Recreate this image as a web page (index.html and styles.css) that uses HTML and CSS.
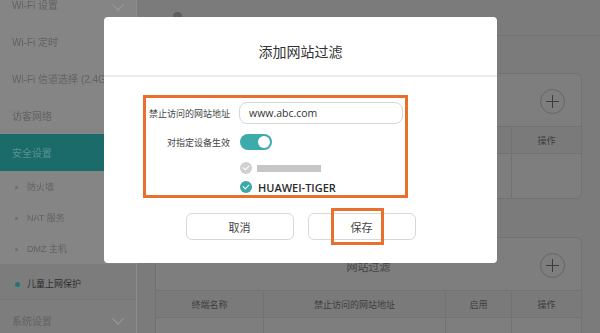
FILE: index.html
```html
<!DOCTYPE html>
<html lang="zh-CN">
<head>
    <meta charset="UTF-8">
    <title>添加网站过滤</title>
    <link rel="stylesheet" href="styles.css">
</head>
<body>
    <div class="page">
        <div class="sidebar">
            <div class="nav-group">Wi-Fi 设置 <span class="chev"></span></div>
            <div class="nav-item">Wi-Fi 定时</div>
            <div class="nav-item">Wi-Fi 信道选择 (2.4G)</div>
            <div class="nav-item">访客网络</div>
            <div class="nav-group active">安全设置</div>
            <div class="nav-sub">防火墙</div>
            <div class="nav-sub">NAT 服务</div>
            <div class="nav-sub">DMZ 主机</div>
            <div class="nav-sub current">儿童上网保护</div>
            <div class="nav-group last">系统设置 <span class="chev"></span></div>
        </div>

        <div class="main">
            <div class="topbar"><span class="top-dot"></span></div>

            <!-- 第一张表被弹窗遮住, 只露出右侧 -->
            <div class="card first">
                <div class="card-title">
                    <span class="add-btn"></span>
                </div>
                <div class="row head">
                    <div class="c1"></div>
                    <div class="c2"></div>
                    <div class="c3"></div>
                    <div class="c4">操作</div>
                </div>
                <div class="row body">
                    <div class="c1"></div>
                    <div class="c2"></div>
                    <div class="c3"></div>
                    <div class="c4"></div>
                </div>
            </div>

            <div class="card">
                <div class="card-title">
                    <span>网站过滤</span>
                    <span class="add-btn"></span>
                </div>
                <div class="row head">
                    <div class="c1">终端名称</div>
                    <div class="c2">禁止访问的网站地址</div>
                    <div class="c3">启用</div>
                    <div class="c4">操作</div>
                </div>
                <div class="row body">
                    <div class="c1"></div>
                    <div class="c2"></div>
                    <div class="c3"></div>
                    <div class="c4"></div>
                </div>
            </div>
        </div>
    </div>

    <div class="modal">
        <div class="modal-head">添加网站过滤</div>
        <div class="modal-body">
            <div class="mark-box">
                <div class="form-row r1">
                    <label>禁止访问的网站地址</label>
                    <div class="input">www.abc.com</div>
                </div>
                <div class="form-row r2">
                    <label>对指定设备生效</label>
                    <div class="switch"><span class="knob"></span></div>
                </div>
                <div class="form-row r3">
                    <label></label>
                    <span class="check off"></span>
                    <span class="hidden-name"></span>
                </div>
                <div class="form-row r4">
                    <label></label>
                    <span class="check on"></span>
                    <span class="dev-name">HUAWEI-TIGER</span>
                </div>
            </div>
            <div class="actions">
                <button class="btn">取消</button>
                <button class="btn save">保存<span class="mark-save"></span></button>
            </div>
        </div>
    </div>
</body>
</html>
```

FILE: styles.css
```css
body {
    margin: 0;
    font-family: "Liberation Sans", "Noto Sans CJK SC", sans-serif;
    background: #7b7b7b;
    overflow: hidden;
}
.page {
    display: flex;
    height: 333px;
    overflow: hidden;
}

/* 左侧菜单 (已被遮罩变暗) */
.sidebar {
    width: 136px;
    flex-shrink: 0;
    background: #858585;
    border-right: 1px solid #8e8e8e;
    margin-top: -14px;
    color: #626262;
    font-size: 10px;
}
.nav-group,
.nav-item {
    height: 37px;
    display: flex;
    align-items: center;
    padding-left: 12px;
    position: relative;
    filter: blur(0.5px);
}
.nav-group.active {
    background: #1a6b69;
    color: #5a9391;
}
.nav-sub {
    height: 31px;
    display: flex;
    align-items: center;
    padding-left: 27px;
    position: relative;
    font-size: 9px;
    filter: blur(0.5px);
}
.nav-sub:first-of-type {
    height: 33px;
}
.nav-sub::before {
    content: "";
    position: absolute;
    left: 15px;
    top: 50%;
    width: 3px;
    height: 3px;
    margin-top: -1px;
    border-radius: 50%;
    background: #6e6e6e;
}
.nav-sub.current {
    background: #7c7c7c;
    color: #2e2e2e;
    padding-top: 4px;
    border-bottom: 1px solid #777;
    filter: none;
}
.nav-sub.current::before {
    width: 5px;
    height: 5px;
    left: 15px;
    margin-top: 0;
    background: #1e7775;
}
.nav-group.last {
    height: 40px;
    background: #7d7d7d;
}
.chev {
    position: absolute;
    right: 14px;
    top: 15px;
    width: 7px;
    height: 7px;
    border-right: 1px solid #9a9a9a;
    border-bottom: 1px solid #9a9a9a;
    transform: rotate(45deg);
}

/* 右侧内容 */
.main {
    flex: 1;
    padding: 0 18px;
}
.topbar {
    height: 35px;
    margin: 0 -18px;
    border-bottom: 1px solid #737373;
    position: relative;
}
.top-dot {
    position: absolute;
    left: 36px;
    top: 12px;
    width: 9px;
    height: 9px;
    border-radius: 50%;
    background: #5e5e5e;
}
.card {
    border: 1px solid #727272;
    border-radius: 6px;
    background: #7e7e7e;
    margin-top: 38px;
    overflow: hidden;
    font-size: 9px;
    color: #3e3e3e;
}
.card.first {
    margin-top: 37px;
}
.card-title {
    height: 53px;
    display: flex;
    align-items: center;
    justify-content: center;
    position: relative;
    font-size: 11px;
    color: #444;
    border-bottom: 1px solid #727272;
    padding-top: 3px;
    box-sizing: border-box;
}
.add-btn {
    position: absolute;
    right: 16px;
    top: 15px;
    width: 23px;
    height: 23px;
    border: 1px solid #666;
    border-radius: 50%;
}
.add-btn::before,
.add-btn::after {
    content: "";
    position: absolute;
    background: #3c3c3c;
    left: 5px;
    top: 11px;
    width: 13px;
    height: 1px;
}
.add-btn::after {
    left: 11px;
    top: 5px;
    width: 1px;
    height: 13px;
}
.row {
    display: flex;
}
.row.head {
    height: 26px;
    border-bottom: 1px solid #727272;
    background: #7a7a7a;
}
.row.body {
    height: 44px;
}
.row > div {
    display: flex;
    align-items: center;
    justify-content: center;
    border-right: 1px solid #727272;
}
.row > div:last-child {
    border-right: none;
}
.c1 { width: 107px; }
.c2 { width: 181px; }
.c3 { width: 65px; }
.c4 { flex: 1; }

/* 弹窗 */
.modal {
    position: absolute;
    left: 104px;
    top: 17px;
    width: 393px;
    height: 246px;
    background: #fff;
    border-radius: 4px;
}
.modal-head {
    height: 60px;
    border-bottom: 2px solid #ececec;
    display: flex;
    align-items: center;
    justify-content: center;
    padding-top: 9px;
    box-sizing: border-box;
    font-size: 14px;
    color: #333;
}
.modal-body {
    padding-top: 18px;
}
.mark-box {
    margin-left: 39px;
    width: 265px;
    height: 103px;
    box-sizing: border-box;
    border: 3px solid #e8702c;
}
.form-row {
    display: flex;
    align-items: center;
}
.form-row label {
    width: 84px;
    margin-right: 9px;
    flex-shrink: 0;
    text-align: right;
    font-size: 9px;
    color: #444;
}
.r1 { margin-top: 4px; height: 22px; }
.r2 { margin-top: 10px; height: 16px; }
.r3 { margin-top: 12px; height: 12px; }
.r4 { margin-top: 7px; height: 12px; }
.input {
    width: 164px;
    height: 22px;
    box-sizing: border-box;
    border: 1px solid #d6d6d6;
    border-radius: 8px;
    padding-left: 9px;
    display: flex;
    align-items: center;
    font-family: "Open Sans", "Liberation Sans", sans-serif;
    font-size: 10.5px;
    color: #333;
}
.switch {
    width: 32px;
    height: 16px;
    margin-left: 1px;
    border-radius: 8px;
    background: #3cabaa;
    position: relative;
}
.knob {
    position: absolute;
    right: 2px;
    top: 2px;
    width: 12px;
    height: 12px;
    border-radius: 50%;
    background: #fff;
}
.check {
    width: 12px;
    height: 12px;
    margin-left: 1px;
    border-radius: 50%;
    position: relative;
    flex-shrink: 0;
}
.check::after {
    content: "";
    position: absolute;
    left: 4px;
    top: 2px;
    width: 3px;
    height: 5px;
    border-right: 1.5px solid #fff;
    border-bottom: 1.5px solid #fff;
    transform: rotate(45deg);
}
.check.off { background: #d0d0d0; }
.check.on { background: #3aa9aa; }
.hidden-name {
    width: 64px;
    height: 7px;
    margin-left: 5px;
    background: #c6c6c6;
}
.dev-name {
    margin-left: 6px;
    font-family: "Open Sans", "Liberation Sans", sans-serif;
    font-size: 11px;
    font-weight: 600;
    color: #2c2c2c;
}
.actions {
    display: flex;
    justify-content: center;
    gap: 14px;
    margin-top: 15px;
}
.btn {
    width: 108px;
    height: 27px;
    border: 1px solid #d8d8d8;
    border-radius: 6px;
    background: #fff;
    font-family: "Liberation Sans", "Noto Sans CJK SC", sans-serif;
    font-size: 11px;
    color: #444;
    padding: 0;
}
.btn.save {
    position: relative;
}
.mark-save {
    position: absolute;
    left: 22px;
    top: -6px;
    width: 53px;
    height: 37px;
    box-sizing: border-box;
    border: 3px solid #e8702c;
}
```
